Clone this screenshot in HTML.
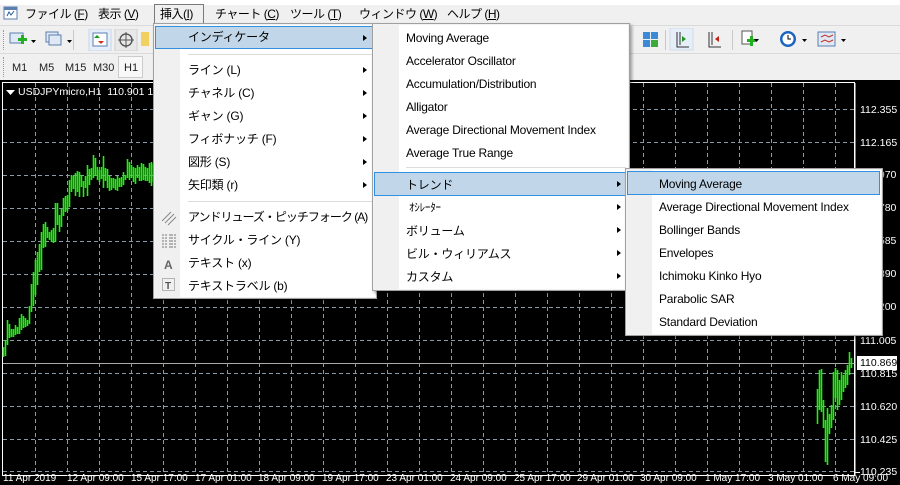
<!DOCTYPE html>
<html><head><meta charset="utf-8"><style>
*{margin:0;padding:0;box-sizing:border-box}
body{width:900px;height:485px;overflow:hidden;background:#f0f0f0;font-family:"Liberation Sans","Noto Sans CJK JP",sans-serif;font-size:12px;color:#000;position:relative}
.abs{position:absolute}
.mb span{position:absolute;top:5px;font-size:12px;white-space:nowrap;letter-spacing:-0.5px}
.menu{position:absolute;background:#f2f2f2;border:1px solid #a0a0a0;box-shadow:2px 2px 3px rgba(0,0,0,.35)}
.menu .gut{position:absolute;left:1px;top:1px;bottom:1px;width:25px;background:#f0f0f0}
.menu .bg{position:absolute;left:26px;top:1px;right:1px;bottom:1px;background:#fff}
.it{position:absolute;white-space:nowrap;font-size:12px;line-height:16px;letter-spacing:-0.2px}
.arr{position:absolute;width:0;height:0;border-left:4px solid #000;border-top:3.5px solid transparent;border-bottom:3.5px solid transparent}
.hl{position:absolute;background:#c1d6e8;border:1px solid #3390e0}
.sep{position:absolute;height:1px;background:#dcdcdc}
.tf{position:absolute;top:62px;font-size:11px;color:#222}
.ax{position:absolute;left:860px;font-size:10.5px;color:#fff}
.tl{position:absolute;top:473px;font-size:10px;color:#fff;white-space:nowrap}
</style></head><body>
<div class="abs" style="left:0;top:0;width:900px;height:5px;background:#fff"></div>
<div class="mb">
<svg class="abs" style="left:3px;top:5px" width="16" height="16"><rect x="1" y="2" width="13" height="12" fill="#fff" stroke="#5a7fb0"/><rect x="1" y="2" width="13" height="3" fill="#5a7fb0"/><path d="M4 11 L6 7 L8 10 L11 6" stroke="#2a5aa0" fill="none"/></svg>
<span style="left:25px">ファイル (<u>F</u>)</span>
<span style="left:98px">表示 (<u>V</u>)</span>
<span style="left:160px">挿入(<u>I</u>)</span>
<span style="left:215px">チャート (<u>C</u>)</span>
<span style="left:290px">ツール (<u>T</u>)</span>
<span style="left:359px">ウィンドウ (<u>W</u>)</span>
<span style="left:447px">ヘルプ (<u>H</u>)</span>
</div>
<div class="abs" style="left:154px;top:4px;width:50px;height:19px;border:1px solid #7a7a7a;border-bottom:none"></div>
<div class="abs" style="left:0;top:25px;width:900px;height:1px;background:#dadada"></div>
<div class="abs" style="left:3px;top:30px;width:1px;height:20px;border-left:1px dotted #999"></div>
<svg class="abs" style="left:9px;top:29px" width="140" height="22">
<rect x="1" y="4" width="13" height="10" fill="#dfe8f4" stroke="#5a7fb0"/><rect x="9" y="9" width="9" height="3" fill="#22b022"/><rect x="12" y="6" width="3" height="9" fill="#22b022"/>
<path d="M22 11 h5 l-2.5 3z" fill="#000"/>
<rect x="37" y="3" width="12" height="10" fill="#dfe8f4" stroke="#5a7fb0"/><rect x="40" y="6" width="12" height="10" fill="#dfe8f4" stroke="#5a7fb0"/>
<path d="M58 11 h5 l-2.5 3z" fill="#000"/>
<rect x="80" y="0" width="22" height="22" fill="#e6eef8" stroke="#c6d6ea"/><rect x="84" y="4" width="14" height="13" fill="#fff" stroke="#5a7fb0"/><path d="M88 6 l3 3 h-6z" fill="#1a9a1a"/><path d="M92 15 l3 -3 h-6z" fill="#d03010"/>
<rect x="106" y="0" width="22" height="22" fill="#e8e8e8" stroke="#d0d0d0"/><circle cx="117" cy="11" r="6" fill="none" stroke="#555" stroke-width="1.4"/><path d="M117 3v16M109 11h16" stroke="#555"/>
<rect x="132" y="3" width="8" height="14" fill="#f2d060"/>
</svg>
<div class="abs" style="left:73px;top:30px;width:1px;height:20px;background:#c8c8c8"></div>
<svg class="abs" style="left:640px;top:28px" width="220" height="24">
<rect x="3" y="4" width="7" height="7" fill="#3a8ad8"/><rect x="11" y="4" width="7" height="7" fill="#3a8ad8"/><rect x="3" y="12" width="7" height="7" fill="#3a8ad8"/><rect x="11" y="12" width="7" height="7" fill="#3aaa3a"/>
<rect x="25" y="2" width="1" height="20" fill="#c8c8c8"/>
<rect x="30" y="0" width="23" height="22" fill="#e6eef8" stroke="#d0dcea"/><path d="M37 4v15h12M40 4v13" stroke="#333" fill="none"/><path d="M42 8l4 3-4 3z" fill="#1a9a1a"/>
<path d="M69 4v15h12M72 4v13" stroke="#333" fill="none"/><path d="M79 8l-4 3 4 3z" fill="#c02010"/>
<rect x="92" y="2" width="1" height="20" fill="#c8c8c8"/>
<rect x="102" y="3" width="10" height="13" fill="#fff" stroke="#555"/><rect x="107" y="11" width="9" height="3" fill="#22b022"/><rect x="110" y="8" width="3" height="10" fill="#22b022"/>
<path d="M114 11h5l-2.5 3z" fill="#000"/>
<circle cx="148" cy="11" r="8" fill="#1a64c0"/><circle cx="148" cy="11" r="5.5" fill="#fff"/><path d="M148 7v4h3" stroke="#000" fill="none"/>
<path d="M162 11h5l-2.5 3z" fill="#000"/>
<rect x="178" y="4" width="17" height="14" fill="#dfe8f4" stroke="#5a7fb0"/><path d="M181 9l4 -2 4 2 4-2M181 14l4-2 4 2 4-2" stroke="#c03020" fill="none"/>
<path d="M201 11h5l-2.5 3z" fill="#000"/>
</svg>
<div class="abs" style="left:0;top:53px;width:900px;height:1px;background:#dadada"></div>
<div class="abs" style="left:3px;top:57px;width:1px;height:20px;border-left:1px dotted #999"></div>
<span class="tf" style="left:12px">M1</span><span class="tf" style="left:39px">M5</span><span class="tf" style="left:65px">M15</span><span class="tf" style="left:93px">M30</span>
<div class="abs" style="left:118px;top:56px;width:25px;height:22px;border:1px solid #ccc;background:#f8f8f8"></div>
<span class="tf" style="left:124px">H1</span>
<div class="abs" style="left:0;top:80px;width:900px;height:405px;background:#000"></div>
<svg class="abs" style="left:0;top:0" width="900" height="485">
<rect x="2.5" y="82.5" width="852" height="393" fill="none" stroke="#fff"/>
<g stroke="#8899aa" stroke-dasharray="4,3" transform="translate(0,80)">
<path d="M3 29.5H855M3 62.5H855M3 95.5H855M3 128.5H855M3 161.5H855M3 194.5H855M3 227.5H855M3 260.5H855M3 293.5H855M3 326.5H855M3 359.5H855M3 391.5H855"/>
<path d="M35.5 3V396M67.5 3V396M99.5 3V396M131.5 3V396M163.5 3V396M195.5 3V396M227.5 3V396M259.5 3V396M291.5 3V396M323.5 3V396M355.5 3V396M387.5 3V396M419.5 3V396M451.5 3V396M483.5 3V396M515.5 3V396M547.5 3V396M579.5 3V396M611.5 3V396M643.5 3V396M675.5 3V396M707.5 3V396M739.5 3V396M771.5 3V396M803.5 3V396M835.5 3V396"/>
</g>
<path d="M3 363.5H855" stroke="#aaa"/>
<path stroke="#22ee11" stroke-width="1.6" fill="none" d="M3.5 347V357M5.5 340V356M7.5 320V345M9.5 324V338M11.5 329V337M13.5 329V337M15.5 325V335M17.5 327V334M19.5 318V334M21.5 314V330M23.5 316V328M25.5 318V327M27.5 320V326M29.5 306V324M31.5 284V312M33.5 272V306M35.5 260V295M37.5 252V285M39.5 244V272M41.5 232V270M43.5 224V248M45.5 222V247M47.5 227V238M49.5 232V240M51.5 230V242M53.5 228V243M55.5 203V242M57.5 203V225M59.5 215V232M61.5 209V227M63.5 198V216M65.5 196V212M67.5 195V211M69.5 180V207M71.5 175V192M73.5 176V189M75.5 173V196M77.5 171V192M79.5 172V197M81.5 175V187M83.5 181V197M85.5 176V188M87.5 165V196M89.5 169V185M91.5 168V180M93.5 155V178M95.5 158V176M97.5 167V180M99.5 170V182M101.5 167V179M103.5 156V188M105.5 168V181M107.5 169V188M109.5 176V191M111.5 178V190M113.5 178V188M115.5 179V190M117.5 176V191M119.5 178V187M121.5 177V187M123.5 172V185M125.5 175V180M127.5 159V178M129.5 162V180M131.5 165V178M133.5 167V182M135.5 168V184M137.5 165V178M139.5 167V181M141.5 163V181M143.5 164V180M145.5 167V181M147.5 168V181M149.5 163V183M151.5 162V186M153.5 164V182"/>
<path stroke="#22ee11" stroke-width="1.6" fill="none" d="M817.5 389V424M819.5 370V410M821.5 369V412M823.5 400V428M825.5 420V462M827.5 408V465M829.5 414V434M831.5 405V428M833.5 372V420M835.5 368V398M837.5 370V410M839.5 380V405M841.5 372V400M843.5 375V392M845.5 370V388M847.5 365V385M849.5 352V375M851.5 358V368"/>
<path d="M855 83V476" stroke="#fff"/>
<path d="M855 472.5h5" stroke="#fff"/>
</svg>
<svg class="abs" style="left:6px;top:90px" width="10" height="6"><path d="M0 0h9l-4.5 5z" fill="#fff"/></svg>
<span class="abs" style="left:18px;top:86px;color:#fff;font-size:10.5px;white-space:nowrap">USDJPYmicro,H1&nbsp; 110.901 110.9</span>
<span class="ax" style="top:104px">112.355</span><span class="ax" style="top:137px">112.165</span><span class="ax" style="top:169px">111.970</span><span class="ax" style="top:202px">111.780</span><span class="ax" style="top:235px">111.585</span><span class="ax" style="top:268px">111.390</span><span class="ax" style="top:301px">111.200</span><span class="ax" style="top:335px">111.005</span>
<div class="abs" style="left:857px;top:356px;width:40px;height:14px;background:#fff;color:#000;font-size:10.5px;padding-left:3px;line-height:14px">110.869</div>
<span class="ax" style="top:368px">110.815</span><span class="ax" style="top:401px">110.620</span><span class="ax" style="top:434px">110.425</span><span class="ax" style="top:466px">110.235</span>
<span class="tl" style="left:3px">11 Apr 2019</span><span class="tl" style="left:67px">12 Apr 09:00</span><span class="tl" style="left:131px">15 Apr 17:00</span><span class="tl" style="left:195px">17 Apr 01:00</span><span class="tl" style="left:258px">18 Apr 09:00</span><span class="tl" style="left:322px">19 Apr 17:00</span><span class="tl" style="left:386px">23 Apr 01:00</span><span class="tl" style="left:450px">24 Apr 09:00</span><span class="tl" style="left:514px">25 Apr 17:00</span><span class="tl" style="left:577px">29 Apr 01:00</span><span class="tl" style="left:640px">30 Apr 09:00</span><span class="tl" style="left:705px">1 May 17:00</span><span class="tl" style="left:768px">3 May 01:00</span><span class="tl" style="left:833px">6 May 09:00</span>

<div class="menu" style="left:153px;top:23px;width:224px;height:276px">
<div class="gut"></div><div class="bg"></div>
<div class="hl" style="left:1px;top:2px;width:221px;height:23px"></div>
<div class="sep" style="left:34px;top:30px;width:185px"></div>
<div class="sep" style="left:34px;top:177px;width:185px"></div>
<div class="it" style="left:34px;top:5px">インディケータ</div>
<div class="it" style="left:34px;top:38px">ライン (L)</div>
<div class="it" style="left:34px;top:61px">チャネル (C)</div>
<div class="it" style="left:34px;top:84px">ギャン (G)</div>
<div class="it" style="left:34px;top:107px">フィボナッチ (F)</div>
<div class="it" style="left:34px;top:130px">図形 (S)</div>
<div class="it" style="left:34px;top:153px">矢印類 (r)</div>
<div class="it" style="left:34px;top:185px;letter-spacing:-1px">アンドリューズ・ピッチフォーク (A)</div>
<div class="it" style="left:34px;top:208px">サイクル・ライン (Y)</div>
<div class="it" style="left:34px;top:231px">テキスト (x)</div>
<div class="it" style="left:34px;top:254px">テキストラベル (b)</div>
<div class="arr" style="left:209px;top:11px"></div><div class="arr" style="left:209px;top:43px"></div><div class="arr" style="left:209px;top:66px"></div><div class="arr" style="left:209px;top:89px"></div><div class="arr" style="left:209px;top:112px"></div><div class="arr" style="left:209px;top:135px"></div><div class="arr" style="left:209px;top:158px"></div>
<svg class="abs" style="left:7px;top:185px" width="16" height="85"><path d="M1 12L10 3M4 14L13 5M7 16L15 8" stroke="#888"/><path d="M2 25v14M5 25v14M9 25v14M11 25v14M14 25v14" stroke="#777" stroke-dasharray="2,1"/><text x="3" y="60" font-size="12" font-weight="bold" fill="#666" font-family="Liberation Sans">A</text><rect x="1.5" y="69.5" width="12" height="12" fill="none" stroke="#777" stroke-dasharray="1,1"/><text x="4" y="80" font-size="10" font-weight="bold" fill="#555" font-family="Liberation Sans">T</text></svg>
</div>
<div class="menu" style="left:372px;top:23px;width:258px;height:268px">
<div class="gut"></div><div class="bg"></div>
<div class="it" style="left:33px;top:6px">Moving Average</div>
<div class="it" style="left:33px;top:29px">Accelerator Oscillator</div>
<div class="it" style="left:33px;top:52px">Accumulation/Distribution</div>
<div class="it" style="left:33px;top:75px">Alligator</div>
<div class="it" style="left:33px;top:98px">Average Directional Movement Index</div>
<div class="it" style="left:33px;top:121px">Average True Range</div>
<div class="sep" style="left:33px;top:143px;width:220px"></div>
<div class="hl" style="left:1px;top:148px;width:255px;height:24px"></div>
<div class="it" style="left:33px;top:153px">トレンド</div>
<div class="it" style="left:36px;top:176px;font-size:11px">ｵｼﾚｰﾀｰ</div>
<div class="it" style="left:33px;top:199px">ボリューム</div>
<div class="it" style="left:33px;top:222px">ビル・ウィリアムス</div>
<div class="it" style="left:33px;top:245px">カスタム</div>
<div class="arr" style="left:244px;top:157px"></div><div class="arr" style="left:244px;top:180px"></div><div class="arr" style="left:244px;top:203px"></div><div class="arr" style="left:244px;top:226px"></div><div class="arr" style="left:244px;top:249px"></div>
</div>
<div class="menu" style="left:625px;top:168px;width:258px;height:168px">
<div class="gut"></div><div class="bg"></div>
<div class="hl" style="left:1px;top:2px;width:253px;height:24px"></div>
<div class="it" style="left:33px;top:7px">Moving Average</div>
<div class="it" style="left:33px;top:30px">Average Directional Movement Index</div>
<div class="it" style="left:33px;top:53px">Bollinger Bands</div>
<div class="it" style="left:33px;top:76px">Envelopes</div>
<div class="it" style="left:33px;top:99px">Ichimoku Kinko Hyo</div>
<div class="it" style="left:33px;top:122px">Parabolic SAR</div>
<div class="it" style="left:33px;top:145px">Standard Deviation</div>
</div>
</body></html>
